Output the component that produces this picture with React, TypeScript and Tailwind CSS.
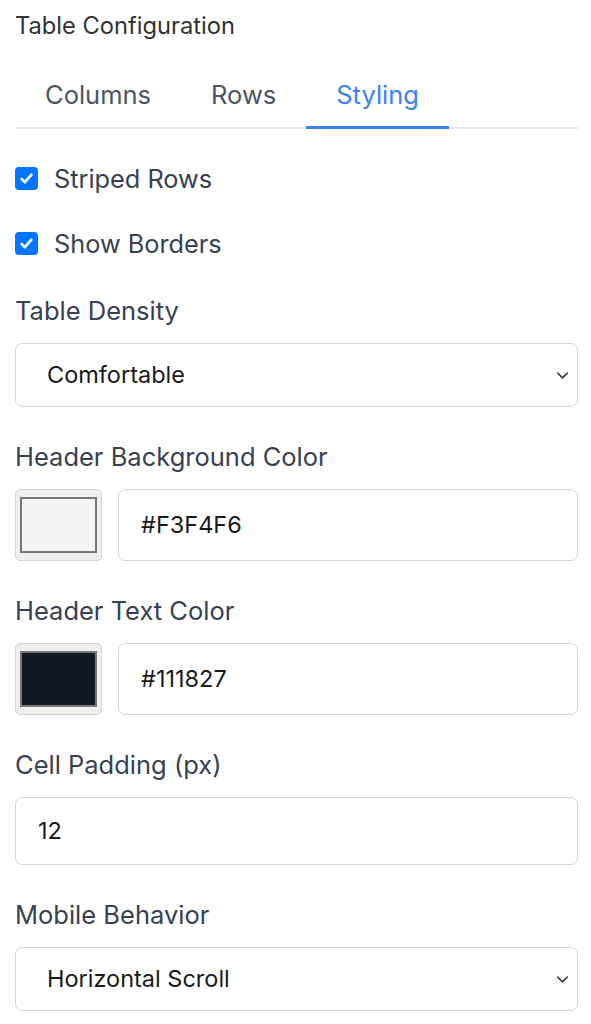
import { ChevronDown } from "lucide-react";

function Check({ label }: { label: string }) {
  return (
    <label className="flex items-center gap-[16px] h-[37px]">
      <span className="w-[23px] h-[23px] rounded-[4px] bg-[#0075ff] flex items-center justify-center">
        <svg viewBox="0 0 16 16" className="w-[17px] h-[17px]" fill="none">
          <path d="M3.5 8.5l3 3 6-7" stroke="white" strokeWidth="2.6" strokeLinecap="round" strokeLinejoin="round" />
        </svg>
      </span>
      <span className="text-[25.3px] text-[#374151]">{label}</span>
    </label>
  );
}

function Label({ children }: { children: React.ReactNode }) {
  return <div className="text-[25.5px] leading-[37px] text-[#374151] mb-[14px]">{children}</div>;
}

function Select({ value }: { value: string }) {
  return (
    <div className="h-[64px] border border-[#d1d5db] rounded-[7px] flex items-center justify-between pl-[31px] pr-[5px] bg-white">
      <span className="text-[23.5px] text-[#1a1a1a]">{value}</span>
      <ChevronDown size={19} strokeWidth={1.8} className="text-[#333]" />
    </div>
  );
}

function ColorRow({ color, hex }: { color: string; hex: string }) {
  return (
    <div className="flex gap-[16px] h-[72px]">
      <div className="w-[87px] h-full rounded-[5px] border border-[#d4d4d4] bg-[#efefef] flex items-center justify-center">
        <div className={`w-[77px] h-[56px] border-2 border-[#777] ${color}`} />
      </div>
      <div className="flex-1 h-full border border-[#d1d5db] rounded-[7px] flex items-center pl-[22px] bg-white">
        <span className="text-[23.5px] text-[#1a1a1a]">{hex}</span>
      </div>
    </div>
  );
}

export default function App() {
  return (
    <div className="bg-white min-h-screen px-[15px] pt-[12px] pr-[13px]" style={{ fontFamily: "Inter, 'Noto Sans', sans-serif" }}>
      <h2 className="text-[23.7px] leading-[28px] text-[#333]">Table Configuration</h2>

      {/* Tabs */}
      <div className="flex border-b-2 border-[#e5e7eb] mt-[24px] h-[65px]">
        <button className="px-[30px] text-[25.5px] text-[#4b5563]">Columns</button>
        <button className="px-[30px] text-[25.5px] text-[#4b5563]">Rows</button>
        <button className="px-[30px] text-[25.5px] text-[#3b82f6] border-b-[3px] border-[#3b82f6] -mb-[2px]">Styling</button>
      </div>

      <div className="mt-[31px] flex flex-col gap-[28px]">
        <Check label="Striped Rows" />
        <Check label="Show Borders" />
      </div>

      <div className="mt-[30px]">
        <Label>Table Density</Label>
        <Select value="Comfortable" />
      </div>

      <div className="mt-[31px]">
        <Label>Header Background Color</Label>
        <ColorRow color="bg-[#f3f4f6]" hex="#F3F4F6" />
      </div>

      <div className="mt-[31px]">
        <Label>Header Text Color</Label>
        <ColorRow color="bg-[#111827]" hex="#111827" />
      </div>

      <div className="mt-[31px]">
        <Label>Cell Padding (px)</Label>
        <div className="h-[68px] border border-[#d1d5db] rounded-[7px] flex items-center pl-[22px] bg-white">
          <span className="text-[23.5px] text-[#1a1a1a]">12</span>
        </div>
      </div>

      <div className="mt-[31px]">
        <Label>Mobile Behavior</Label>
        <Select value="Horizontal Scroll" />
      </div>
    </div>
  );
}
